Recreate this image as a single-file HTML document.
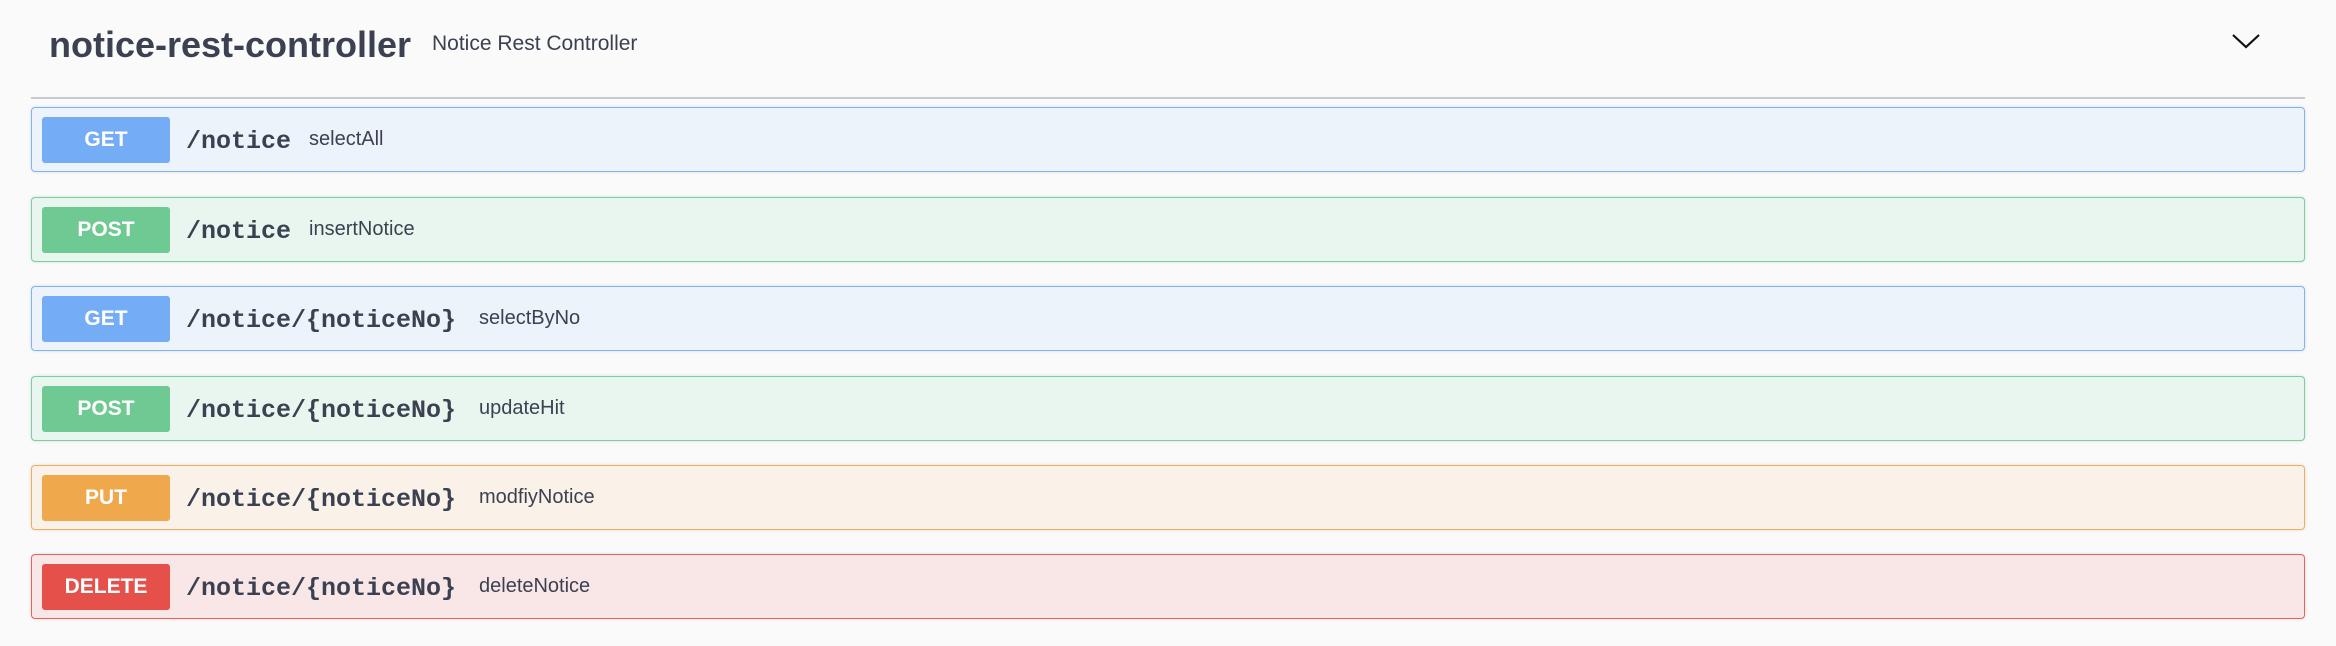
<!DOCTYPE html>
<html><head><meta charset="utf-8"><style>
html,body{margin:0;padding:0;background:#fafafa;width:2336px;height:646px;overflow:hidden;position:relative;font-family:"Liberation Sans","Noto Sans CJK KR",sans-serif;color:#3b4151}
.title{position:absolute;left:49px;top:24px;font-size:36px;font-weight:bold;color:#3b4151;white-space:nowrap}
.sub{position:absolute;left:432px;top:32px;font-size:21px;white-space:nowrap}
.div{position:absolute;left:31px;width:2274px;top:97px;height:2px;background:#c9c9ce}
.row{position:absolute;left:31px;width:2272px;height:63px;border:1px solid;border-radius:4px;box-shadow:0 0 3px rgba(0,0,0,.12)}
.badge{position:absolute;left:10px;top:9px;width:128px;height:46px;border-radius:3px;color:#fff;font-weight:bold;font-size:21px;text-align:center;line-height:46px}
.path{position:absolute;left:154px;top:2px;line-height:63px;font-family:"Liberation Mono",monospace;font-weight:bold;font-size:25px;color:#3b4151;white-space:nowrap}
.desc{position:absolute;top:0;line-height:62px;font-size:20px;color:#3b4151;white-space:nowrap}
.get{background:#edf3fb;border-color:#7fb3f5}.get .badge{background:#74adf6}
.post{background:#e9f6ef;border-color:#78cf9f}.post .badge{background:#6fc992}
.put{background:#faf2e8;border-color:#f0ae5a}.put .badge{background:#efa84c}
.del{background:#f9e6e6;border-color:#e8635c}.del .badge{background:#e5504a}
</style></head><body>
<div class="title">notice-rest-controller</div>
<div class="sub">Notice Rest Controller</div>
<svg style="position:absolute;left:2230px;top:32px" width="32" height="20" viewBox="0 0 32 20"><path d="M3 3 L16 15 L29 3" fill="none" stroke="#111" stroke-width="2.2"/></svg>
<div class="div"></div>
<div class="row get" style="top:107px"><div class="badge">GET</div><div class="path">/notice</div><div class="desc" style="left:277px">selectAll</div></div>
<div class="row post" style="top:197px"><div class="badge">POST</div><div class="path">/notice</div><div class="desc" style="left:277px">insertNotice</div></div>
<div class="row get" style="top:286px"><div class="badge">GET</div><div class="path">/notice/{noticeNo}</div><div class="desc" style="left:447px">selectByNo</div></div>
<div class="row post" style="top:376px"><div class="badge">POST</div><div class="path">/notice/{noticeNo}</div><div class="desc" style="left:447px">updateHit</div></div>
<div class="row put" style="top:465px"><div class="badge">PUT</div><div class="path">/notice/{noticeNo}</div><div class="desc" style="left:447px">modfiyNotice</div></div>
<div class="row del" style="top:554px"><div class="badge">DELETE</div><div class="path">/notice/{noticeNo}</div><div class="desc" style="left:447px">deleteNotice</div></div>
</body></html>
